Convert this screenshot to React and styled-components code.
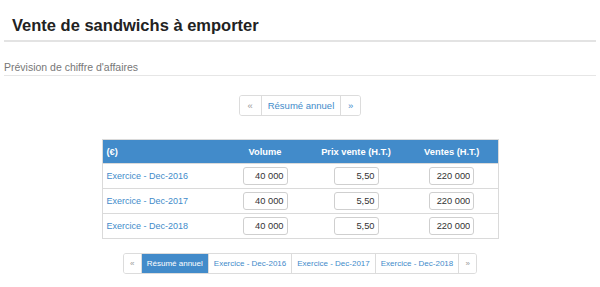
import React from "react";
import styled, { createGlobalStyle } from "styled-components";

const Global = createGlobalStyle`
  html, body { margin: 0; padding: 0; background: #fff; }
  body { font-family: "Liberation Sans", Arial, sans-serif; color: #333; }
`;

const Page = styled.div`
  padding: 0 4px;
  width: 592px;
`;

const Title = styled.h1`
  margin: 0;
  padding: 14.5px 8px 5.5px;
  font-size: 16.5px;
  line-height: 20px;
  font-weight: bold;
  color: #222;
  border-bottom: 2px solid #e3e3e3;
`;

const Subtitle = styled.h2`
  margin: 19px 0 0;
  padding: 0 0 2px;
  font-size: 10.5px;
  line-height: 12px;
  font-weight: normal;
  color: #777;
  border-bottom: 1px solid #e6e6e6;
`;

const PagerRow = styled.div`
  display: flex;
  justify-content: center;
  margin-top: ${(p) => p.$mt}px;
`;

const Pager = styled.div`
  display: flex;
  border: 1px solid #dcdcdc;
  border-radius: 3px;
  overflow: hidden;
  background: #fff;
`;

const PageItem = styled.span`
  display: flex;
  align-items: center;
  justify-content: center;
  height: ${(p) => p.$h}px;
  padding: 0 ${(p) => p.$px}px;
  min-width: ${(p) => p.$mw || 0}px;
  box-sizing: border-box;
  font-size: ${(p) => p.$fs}px;
  color: ${(p) => (p.$active ? "#fff" : p.$muted ? "#999" : "#428bca")};
  background: ${(p) => (p.$active ? "#428bca" : "#fff")};
  border-left: ${(p) => (p.$first ? "none" : "1px solid #dcdcdc")};
  white-space: nowrap;
`;

const TableWrap = styled.div`
  display: flex;
  justify-content: center;
  margin-top: 23px;
`;

const Table = styled.table`
  border-collapse: collapse;
  width: 396px;
  table-layout: fixed;
  border: 1px solid #dadada;
  font-size: 9px;
`;

const Th = styled.th`
  background: #428bca;
  color: #fff;
  font-weight: bold;
  height: 23px;
  padding: 0 4px;
  text-align: ${(p) => p.$align || "center"};
  font-size: 9.3px;
`;

const Tr = styled.tr`
  border-top: 1px solid #dadada;
`;

const Td = styled.td`
  height: 24px;
  padding: 0 4px;
  text-align: ${(p) => p.$align || "center"};
  vertical-align: middle;
`;

const Link = styled.a`
  color: #428bca;
  text-decoration: none;
  font-size: 9px;
`;

const Input = styled.input`
  width: ${(p) => p.$w}px;
  height: 18px;
  box-sizing: border-box;
  border: 1px solid #cfcfcf;
  border-radius: 3px;
  text-align: right;
  padding: 0 3px;
  font-family: "Liberation Sans", Arial, sans-serif;
  font-size: 9.3px;
  color: #333;
  display: block;
  margin: 0 auto;
  outline: none;
`;

const years = ["2016", "2017", "2018"];

export default function App() {
  return (
    <>
      <Global />
      <Page>
        <Title>Vente de sandwichs à emporter</Title>
        <Subtitle>Prévision de chiffre d'affaires</Subtitle>
        <PagerRow $mt={19}>
          <Pager>
            <PageItem $first $muted $h={19} $px={0} $mw={21} $fs={9.5}>«</PageItem>
            <PageItem $h={19} $px={6} $fs={9.5}>Résumé annuel</PageItem>
            <PageItem $h={19} $px={0} $mw={20} $fs={9.5}>»</PageItem>
          </Pager>
        </PagerRow>
        <TableWrap>
          <Table>
            <colgroup>
              <col style={{ width: 122 }} />
              <col style={{ width: 82 }} />
              <col style={{ width: 100 }} />
              <col style={{ width: 92 }} />
            </colgroup>
            <thead>
              <tr>
                <Th $align="left">(€)</Th>
                <Th>Volume</Th>
                <Th>Prix vente (H.T.)</Th>
                <Th>Ventes (H.T.)</Th>
              </tr>
            </thead>
            <tbody>
              {years.map((y) => (
                <Tr key={y}>
                  <Td $align="left">
                    <Link href="#">Exercice - Dec-{y}</Link>
                  </Td>
                  <Td>
                    <Input $w={45} defaultValue="40 000" />
                  </Td>
                  <Td>
                    <Input $w={45} defaultValue="5,50" />
                  </Td>
                  <Td>
                    <Input $w={45} defaultValue="220 000" />
                  </Td>
                </Tr>
              ))}
            </tbody>
          </Table>
        </TableWrap>
        <PagerRow $mt={14}>
          <Pager>
            <PageItem $first $muted $h={19} $px={0} $mw={17} $fs={8}>«</PageItem>
            <PageItem $active $h={19} $px={5} $fs={8}>Résumé annuel</PageItem>
            <PageItem $h={19} $px={5} $fs={8}>Exercice - Dec-2016</PageItem>
            <PageItem $h={19} $px={5} $fs={8}>Exercice - Dec-2017</PageItem>
            <PageItem $h={19} $px={5} $fs={8}>Exercice - Dec-2018</PageItem>
            <PageItem $muted $h={19} $px={0} $mw={18} $fs={8}>»</PageItem>
          </Pager>
        </PagerRow>
      </Page>
    </>
  );
}
